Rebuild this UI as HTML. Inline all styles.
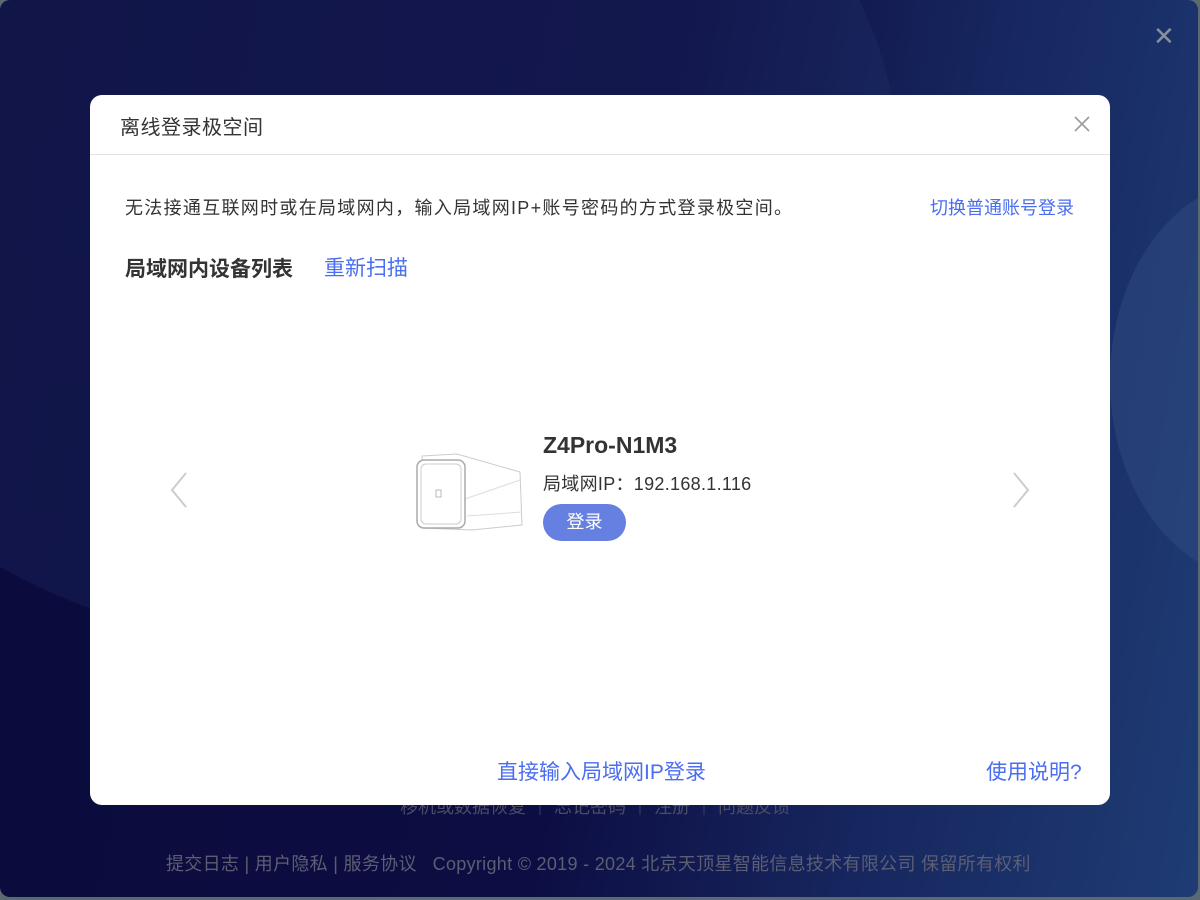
<!DOCTYPE html>
<html><head><meta charset="utf-8"><style>
*{margin:0;padding:0;box-sizing:border-box}
body{width:1200px;height:900px;overflow:hidden;background:#5a6a70;font-family:"Liberation Sans","Noto Sans CJK SC",sans-serif}
.win{position:absolute;left:0;top:0;width:1198px;height:897px;border-radius:10px;overflow:hidden;background:linear-gradient(100deg,#0b0b3c 0%,#0c0d42 50%,#16245c 72%,#1f3c74 100%)}
.blob1{position:absolute;left:-250px;top:-300px;width:1150px;height:950px;border-radius:50%;background:rgba(40,60,120,0.22)}
.blob2{position:absolute;left:1110px;top:180px;width:300px;height:400px;border-radius:50%;background:rgba(50,80,130,0.45)}
.wx{position:absolute;left:1153px;top:25px;color:#8a8f9c;font-size:26px;line-height:22px}
.dlg{position:absolute;left:90px;top:95px;width:1020px;height:710px;background:#fff;border-radius:12px}
.hd{height:60px;border-bottom:1px solid #e2e2e2;padding:16px 0 0 30px;font-size:20px;color:#333;letter-spacing:0.5px}
.dx{position:absolute;right:18px;top:19px}
.t{position:absolute;font-size:18px;color:#333;white-space:nowrap}
.blue{color:#4a6ef0}
.btn{position:absolute;left:453px;top:409px;width:83px;height:37px;border-radius:19px;background:#6680e2;color:#fff;font-size:18px;text-align:center;line-height:37px}
.foot{position:absolute;top:850px;left:166px;color:#5c5e74;font-size:18px;letter-spacing:0.3px;white-space:nowrap}
</style></head><body>
<div class="win"><div class="blob1"></div><div class="blob2"></div>
<div class="wx">✕</div>
<div style="position:absolute;left:400px;top:793px;color:#4a4c66;font-size:18px;white-space:nowrap">移机或数据恢复 ｜ 忘记密码 ｜ 注册 ｜ 问题反馈</div>
<div class="foot">提交日志 | 用户隐私 | 服务协议 &nbsp; Copyright © 2019 - 2024 北京天顶星智能信息技术有限公司 保留所有权利</div>
</div>
<div class="dlg">
<div class="hd">离线登录极空间</div>
<svg class="dx" width="20" height="20" viewBox="0 0 20 20"><path d="M3 3L17 17M17 3L3 17" stroke="#999" stroke-width="1.6"/></svg>
<div class="t" style="left:35px;top:99px;letter-spacing:1.3px">无法接通互联网时或在局域网内，输入局域网IP+账号密码的方式登录极空间。</div>
<div class="t blue" style="left:840px;top:99px">切换普通账号登录</div>
<div class="t" style="left:35px;top:158px;font-size:21px;font-weight:bold">局域网内设备列表</div>
<div class="t blue" style="left:234px;top:157px;font-size:21px">重新扫描</div>
<svg style="position:absolute;left:78px;top:375px" width="24" height="40"><path d="M18 3L4 20L18 37" fill="none" stroke="#ccc" stroke-width="2"/></svg>
<svg style="position:absolute;left:918px;top:375px" width="24" height="40"><path d="M6 3L20 20L6 37" fill="none" stroke="#ccc" stroke-width="2"/></svg>
<svg style="position:absolute;left:322px;top:355px" width="112" height="85" viewBox="0 0 112 85"><path d="M10 6L45 4L108 22L110 75L60 80L10 78Z" fill="#fff" stroke="#ccc"/><path d="M50 50L108 30M55 66L110 62" stroke="#ddd" fill="none"/><rect x="5" y="10" width="48" height="68" rx="7" fill="#fff" stroke="#aaa" stroke-width="1.5"/><rect x="9" y="14" width="40" height="60" rx="5" fill="none" stroke="#ccc"/><rect x="24" y="40" width="5" height="7" fill="none" stroke="#aaa" stroke-width=".8"/></svg>
<div class="t" style="left:453px;top:337px;font-size:23px;font-weight:bold">Z4Pro-N1M3</div>
<div class="t" style="left:453px;top:375px;letter-spacing:0.3px">局域网IP：192.168.1.116</div>
<div class="btn">登录</div>
<div class="t blue" style="left:407px;top:661px;font-size:21px">直接输入局域网IP登录</div>
<div class="t blue" style="left:896px;top:661px;font-size:21px">使用说明?</div>
</div>
</body></html>
